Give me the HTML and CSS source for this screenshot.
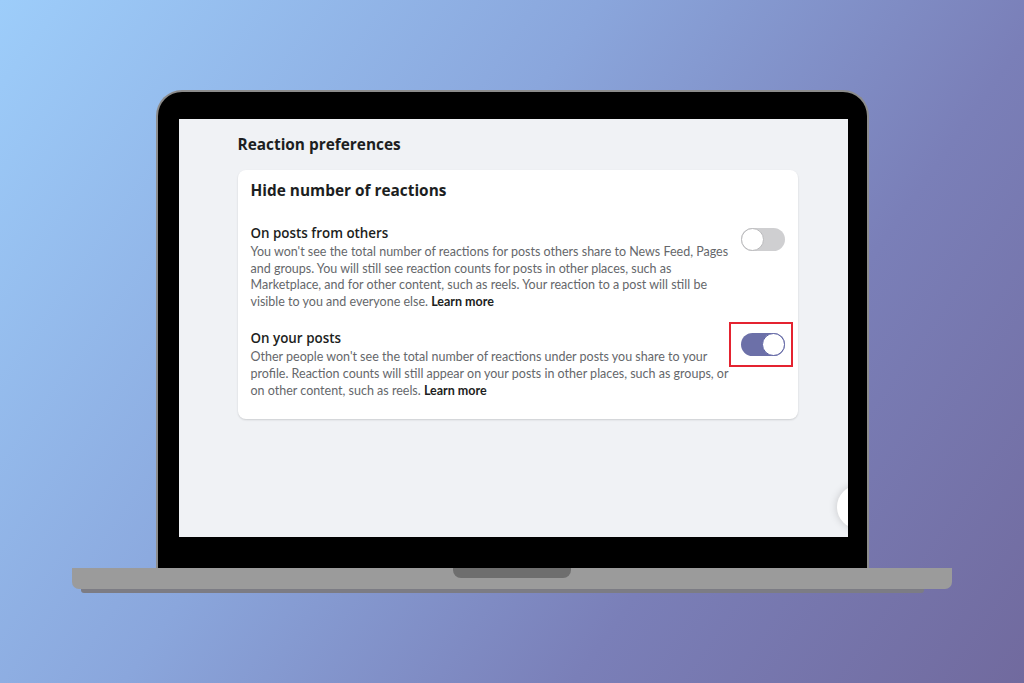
FILE: index.html
```html
<!DOCTYPE html>
<html lang="en">
<head>
  <meta charset="UTF-8">
  <title>Reaction preferences</title>
  <link rel="stylesheet" href="styles.css">
</head>
<body>
  <div class="laptop">
    <div class="lid">
      <div class="screen">
        <h2 class="page-title">Reaction preferences</h2>

        <div class="card">
          <h3 class="card-title">Hide number of reactions</h3>

          <div class="setting">
            <div class="setting-text">
              <div class="setting-name">On posts from others</div>
              <p class="setting-desc">You won't see the total number of reactions for posts others share to News Feed, Pages and groups. You will still see reaction counts for posts in other places, such as Marketplace, and for other content, such as reels. Your reaction to a post will still be visible to you and everyone else. <b>Learn more</b></p>
            </div>
            <div class="toggle-wrap">
              <span class="toggle"></span>
            </div>
          </div>

          <div class="setting">
            <div class="setting-text">
              <div class="setting-name">On your posts</div>
              <p class="setting-desc">Other people won't see the total number of reactions under posts you share to your profile. Reaction counts will still appear on your posts in other places, such as groups, or on other content, such as reels. <b>Learn more</b></p>
            </div>
            <div class="toggle-wrap highlight">
              <span class="toggle on"></span>
            </div>
          </div>
        </div>

        <span class="float-btn"></span>
      </div>
    </div>
    <div class="base">
      <span class="notch"></span>
    </div>
    <div class="base-shadow"></div>
  </div>
</body>
</html>
```

FILE: styles.css
```css
html, body {
  margin: 0;
  height: 683px;
  overflow: hidden;
}
body {
  font-family: "Open Sans", "Noto Sans", sans-serif;
  background: linear-gradient(125deg, #9dcdfa 0%, #8aa6dc 40%, #7a7fb8 70%, #716a9e 100%);
}
.laptop {
  display: flex;
  flex-direction: column;
  align-items: center;
  padding-top: 90px;
}
.lid {
  width: 713px;
  height: 478px;
  box-sizing: border-box;
  background: #000;
  border: 2px solid #8c8c8c;
  border-bottom: none;
  border-radius: 26px 26px 0 0;
  padding: 27px 19px 31px 21px;
}
.screen {
  position: relative;
  overflow: hidden;
  height: 418px;
  background: #f0f2f5;
  padding: 0 50px 0 59px;
  color: #1c1e21;
}
.page-title {
  margin: 0;
  padding-top: 15px;
  font-size: 15.4px;
  font-weight: 700;
  line-height: 22px;
}
.card {
  margin-top: 14px;
  background: #fff;
  border-radius: 8px;
  box-shadow: 0 1px 2px rgba(0, 0, 0, 0.15);
  padding: 10px 13px 20px 13px;
}
.card-title {
  margin: 0 0 22px;
  font-size: 15.4px;
  font-weight: 700;
  line-height: 22px;
}
.setting {
  display: flex;
  gap: 12px;
  margin-bottom: 19px;
}
.setting:last-child {
  margin-bottom: 0;
}
.setting-text {
  flex: 1;
}
.setting-name {
  font-size: 13.4px;
  font-weight: 600;
  line-height: 18px;
}
.setting-desc {
  margin: 2px 0 0;
  font-family: Lato, "Open Sans", sans-serif;
  font-size: 12.5px;
  line-height: 16.6px;
  color: #65676b;
}
.setting-desc b {
  color: #1c1e21;
  font-weight: 700;
}
.toggle-wrap {
  position: relative;
  width: 44px;
  padding-top: 4px;
}
.toggle-wrap.highlight::before {
  content: "";
  position: absolute;
  left: -12px;
  right: -8px;
  top: -7px;
  height: 41px;
  border: 2px solid #e42330;
}
.toggle {
  display: block;
  position: relative;
  width: 44px;
  height: 23px;
  border-radius: 12px;
  background: #cfcfd1;
}
.toggle::after {
  content: "";
  position: absolute;
  left: 0;
  top: 0;
  width: 21px;
  height: 21px;
  border-radius: 50%;
  background: #fff;
  border: 1px solid #b9b9bb;
}
.toggle.on {
  background: #6c70a8;
}
.toggle.on::after {
  left: auto;
  right: 0;
  border-color: #5f64a4;
}
.float-btn {
  position: absolute;
  left: 658px;
  top: 366px;
  width: 44px;
  height: 44px;
  border-radius: 50%;
  background: #fff;
  box-shadow: 0 0 8px rgba(0, 0, 0, 0.18);
}
.base {
  width: 880px;
  height: 21px;
  background: #9b9b9b;
  border-radius: 0 0 7px 7px;
  display: flex;
  justify-content: center;
}
.notch {
  width: 118px;
  height: 10px;
  background: #6e6e6e;
  border-radius: 0 0 8px 8px;
}
.base-shadow {
  width: 843px;
  height: 4px;
  margin-left: -19px;
  background: #7c7c84;
  border-radius: 0 0 3px 3px;
}
```
